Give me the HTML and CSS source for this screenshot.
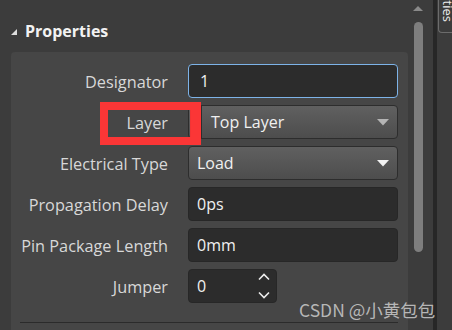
FILE: index.html
```html
<!DOCTYPE html>
<html lang="en">
<head>
<meta charset="utf-8">
<title>Properties</title>
<link rel="stylesheet" href="styles.css">
</head>
<body>
<div class="frame">
  <main class="main">
    <header class="header">
      <svg class="caret" width="6" height="6" viewBox="0 0 6 6"><polygon points="6,0 6,6 0,6" fill="#dedede"/></svg>
      <span class="title">Properties</span>
    </header>
    <section class="panel">
      <div class="grid">
        <label class="lbl">Designator</label>
        <div class="field input focus"><span class="val val-1">1</span></div>

        <label class="lbl">Layer</label>
        <div class="field select">
          <span class="swatch"></span>
          <span class="val">Top Layer</span>
          <svg class="arrow" width="12" height="7" viewBox="0 0 12 7"><polygon points="0,0 12,0 6,6.5" fill="#b4b4b4"/></svg>
        </div>

        <label class="lbl">Electrical Type</label>
        <div class="field select">
          <span class="val">Load</span>
          <svg class="arrow" width="12" height="7" viewBox="0 0 12 7"><polygon points="0,0 12,0 6,6.5" fill="#f2f2f2"/></svg>
        </div>

        <label class="lbl">Propagation Delay</label>
        <div class="field input"><span class="val">0ps</span></div>

        <label class="lbl">Pin Package Length</label>
        <div class="field input"><span class="val">0mm</span></div>

        <label class="lbl">Jumper</label>
        <div class="field input spin">
          <span class="val">0</span>
          <span class="spinners">
            <svg width="12" height="8" viewBox="0 0 12 8"><polyline points="1,6.5 6,1.5 11,6.5" fill="none" stroke="#ececec" stroke-width="1.6"/></svg>
            <svg width="12" height="8" viewBox="0 0 12 8"><polyline points="1,1.5 6,6.5 11,1.5" fill="none" stroke="#ececec" stroke-width="1.6"/></svg>
          </span>
        </div>
      </div>
      <div class="sep"></div>
    </section>
  </main>
  <div class="scroll">
    <svg class="up" width="10" height="5" viewBox="0 0 10 5"><polygon points="5,0 10,5 0,5" fill="#8a8a8a"/></svg>
    <div class="thumb"></div>
  </div>
  <div class="divider"></div>
  <div class="tabs">
    <div class="tab"><span class="tab-text">Properties</span></div>
  </div>
</div>
<div class="annot"></div>
<div class="watermark">CSDN @小黄包包</div>
</body>
</html>
```
FILE: styles.css
```css
html, body {
  margin: 0;
  padding: 0;
}
body {
  width: 452px;
  height: 330px;
  overflow: hidden;
  background: #3c3c3c;
  font-family: "Open Sans", "Noto Sans", sans-serif;
  position: relative;
}
.frame {
  display: flex;
  height: 330px;
}
.main {
  width: 408px;
  flex: 0 0 408px;
  display: flex;
  flex-direction: column;
}
.header {
  display: flex;
  align-items: center;
  padding: 20px 0 0 11px;
  height: 22px;
}
.caret {
  display: block;
  margin-right: 8px;
  margin-top: 1px;
}
.title {
  color: #f2f2f2;
  font-weight: 700;
  font-size: 16px;
  line-height: 22px;
}
.panel {
  margin: 10px 0 0 11px;
  flex: 1;
  background: #464646;
  border-radius: 4px 4px 0 0;
  padding: 12px 10px 0 0;
}
.grid {
  display: grid;
  grid-template-columns: 157px 210px;
  grid-auto-rows: 34px;
  column-gap: 20px;
  row-gap: 7px;
  align-items: center;
}
.lbl {
  text-align: right;
  color: #d8d8d8;
  font-size: 16.3px;
  line-height: 22px;
  padding-top: 1px;
  white-space: nowrap;
}
.field {
  box-sizing: border-box;
  height: 34px;
  border-radius: 4px;
  display: flex;
  align-items: center;
  color: #f0f0f0;
  font-size: 16px;
  padding-left: 8px;
}
.input {
  background: #2c2c2c;
  border: 1px solid #272727;
}
.focus {
  border-color: #7db3e8;
}
.val-1 {
  padding-left: 3px;
}
.select {
  background: linear-gradient(#606060, #4d4d4d);
  border: 1px solid #2d2d2d;
  padding-right: 8px;
}
.select .val {
  flex: 1;
}
.swatch {
  width: 11px;
  height: 32px;
  margin-left: -7px;
  margin-right: 9px;
  background: #f23434;
  border-right: 1px solid #2e2e2e;
}
.arrow {
  display: block;
}
.spin {
  width: 89px;
  padding-right: 6px;
}
.spin .val {
  flex: 1;
}
.spinners {
  display: flex;
  flex-direction: column;
  gap: 10px;
}
.spinners svg {
  display: block;
}
.sep {
  margin: 19px 0 0 9px;
  height: 1px;
  background: #2b2b2b;
}
.scroll {
  flex: 0 0 25px;
  padding-top: 6px;
  box-sizing: border-box;
}
.up {
  display: block;
  margin-left: 5px;
}
.thumb {
  margin: 11px 0 0 6px;
  width: 9px;
  height: 230px;
  border-radius: 5px;
  background: #7e7e7e;
}
.divider {
  flex: 0 0 4px;
  background: #272727;
}
.tabs {
  flex: 1 1 0;
  min-width: 0;
  padding-left: 1px;
  overflow: hidden;
}
.tab {
  height: 33px;
  width: 30px;
  box-sizing: border-box;
  border-left: 1px solid #6c6c6c;
  border-bottom: 1px solid #6c6c6c;
  border-bottom-left-radius: 4px;
  overflow: hidden;
  display: flex;
  flex-direction: column;
  justify-content: flex-end;
  padding-bottom: 10px;
}
.tab-text {
  writing-mode: vertical-rl;
  font-size: 13px;
  line-height: 18px;
  color: #eeeeee;
  white-space: nowrap;
  width: 18px;
}
.annot {
  position: absolute;
  left: 100px;
  top: 102px;
  width: 101px;
  height: 43px;
  box-sizing: border-box;
  border: 8px solid #fb3636;
  border-right-width: 10px;
}
.watermark {
  position: absolute;
  left: 299px;
  top: 300px;
  font-family: "Noto Sans CJK SC", "Noto Sans", sans-serif;
  font-size: 17.5px;
  line-height: 20px;
  color: rgba(205, 205, 205, 0.85);
  white-space: nowrap;
}
```
